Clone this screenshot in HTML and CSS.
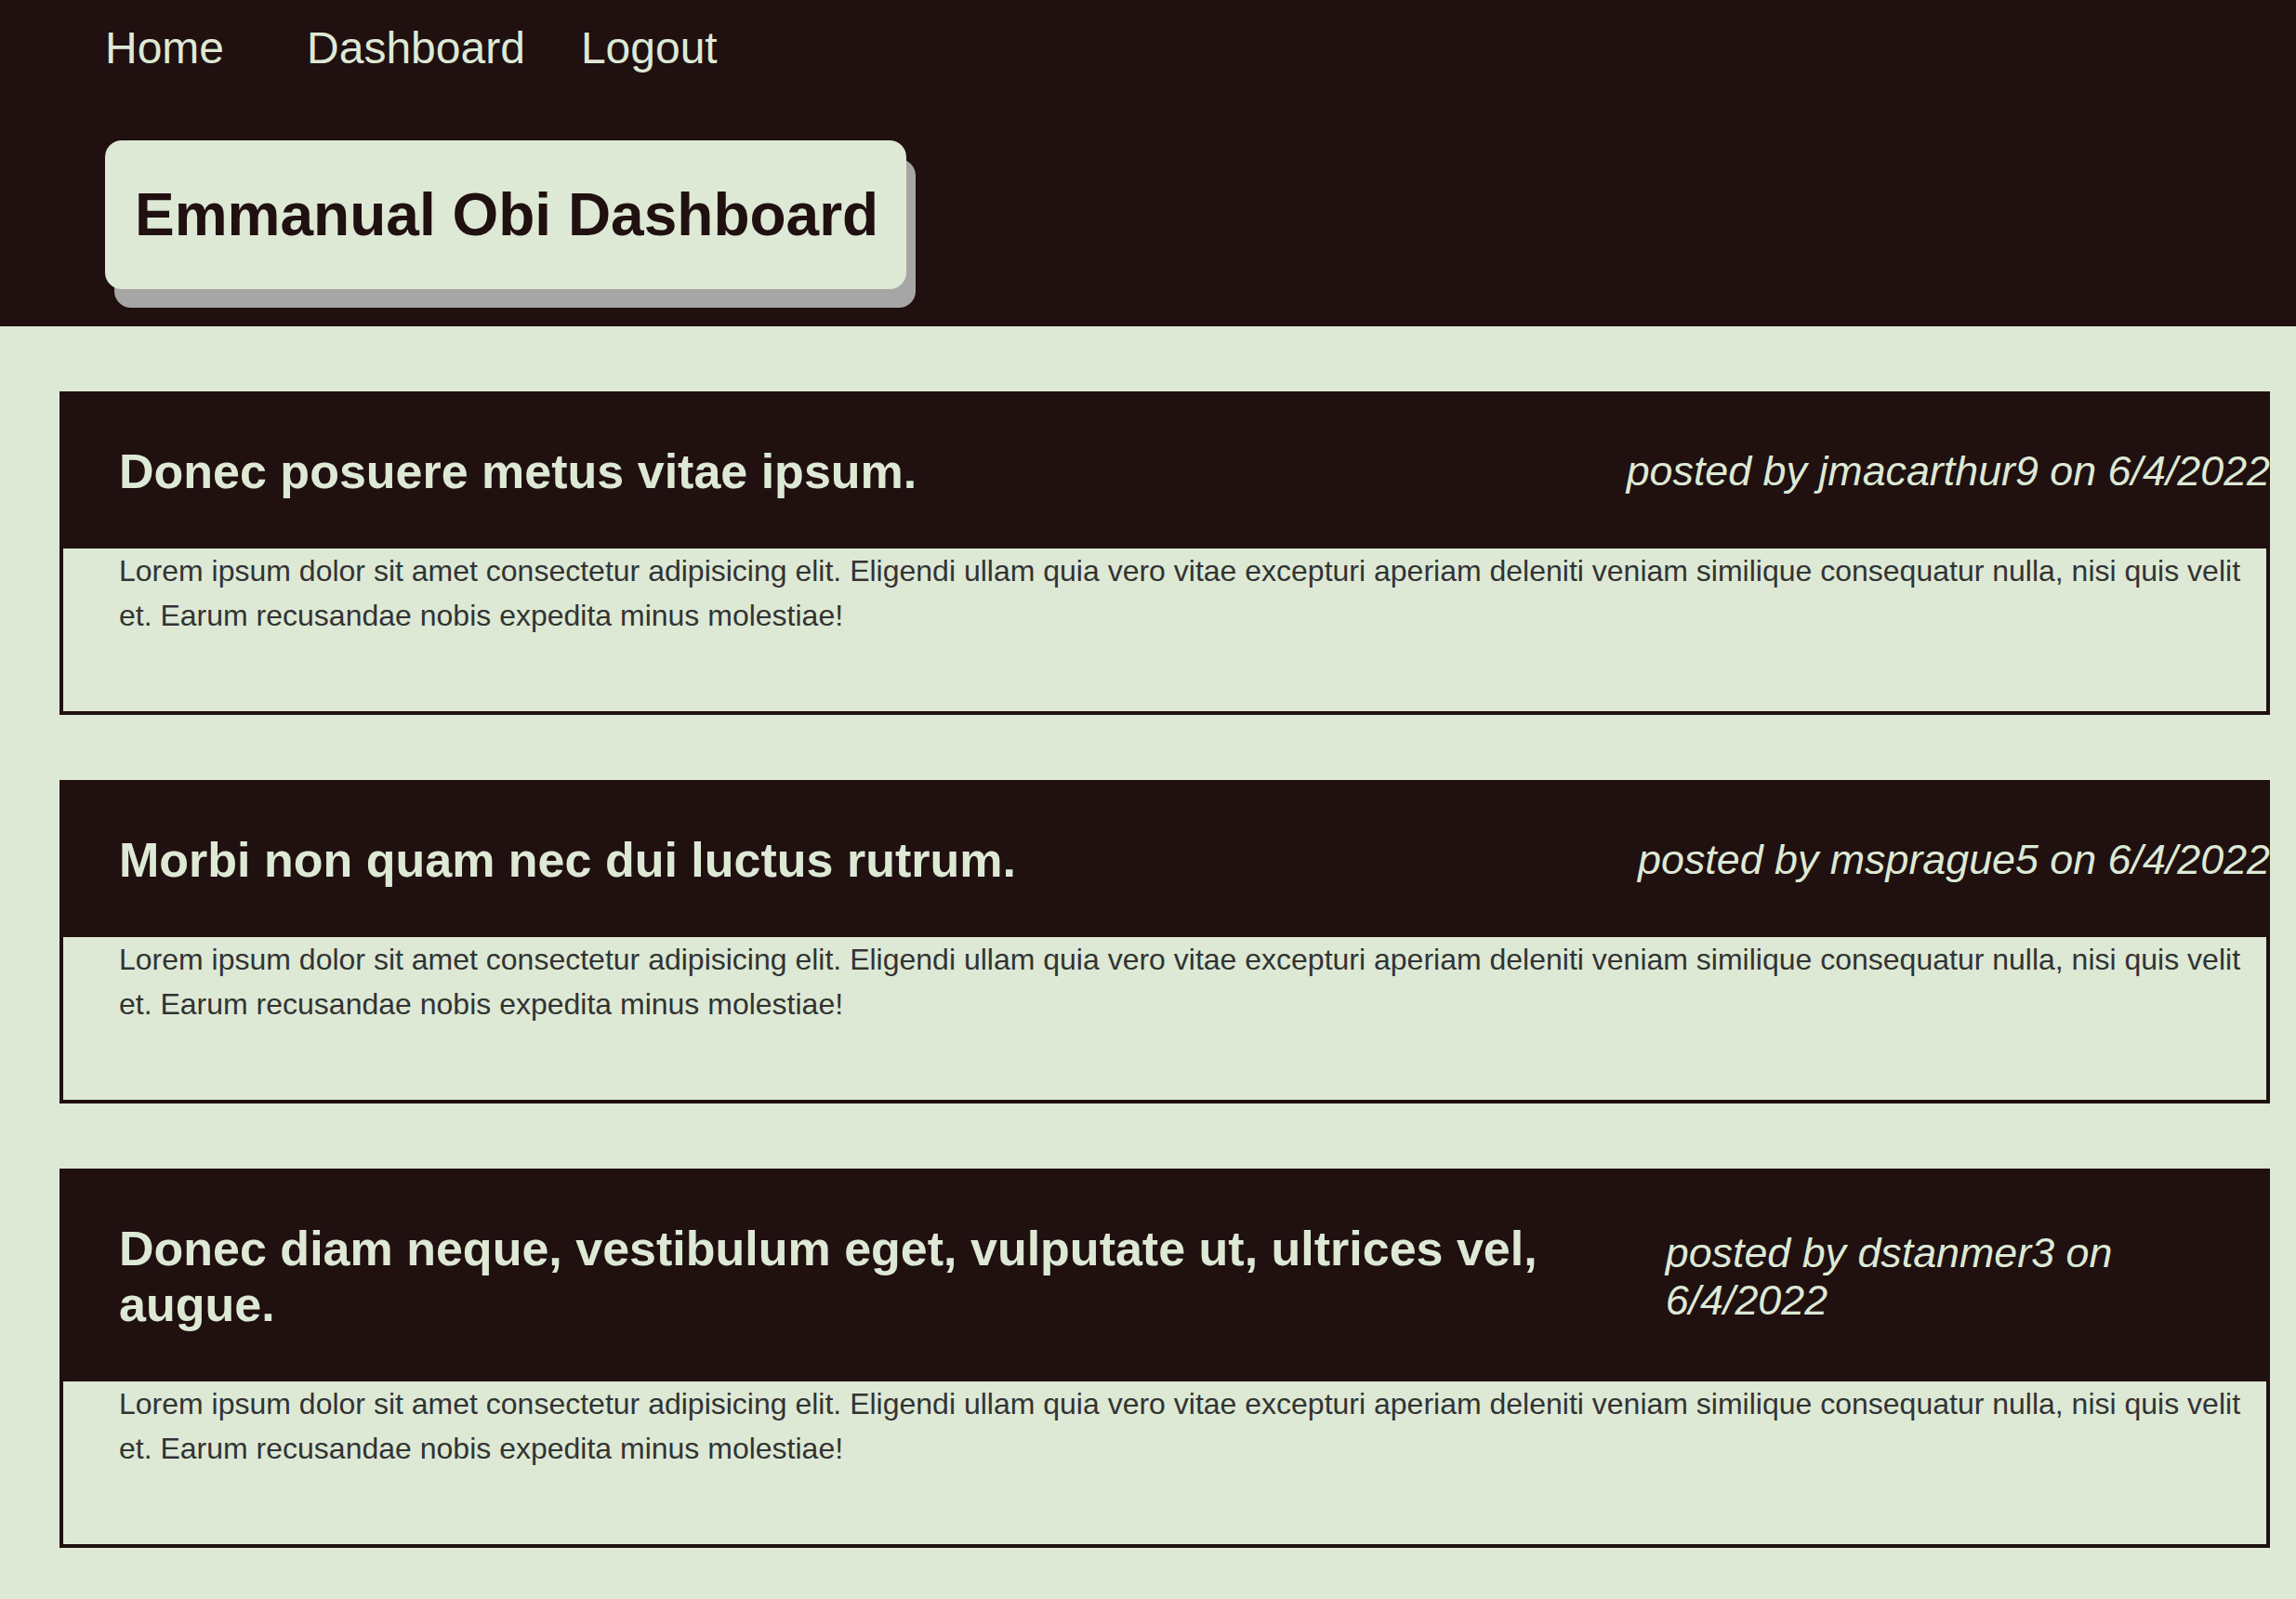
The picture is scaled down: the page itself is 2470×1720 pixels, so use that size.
FILE: index.html
```html
<!DOCTYPE html>
<html lang="en">
<head>
<meta charset="utf-8">
<title>Emmanual Obi Dashboard</title>
<link rel="stylesheet" href="styles.css">
</head>
<body>
<header class="site-header">
  <nav class="nav">
    <a class="nav-link nav-home" href="#">Home</a>
    <a class="nav-link" href="#">Dashboard</a>
    <a class="nav-link" href="#">Logout</a>
  </nav>
  <div class="title-box">
    <h1 class="title">Emmanual Obi Dashboard</h1>
  </div>
</header>
<main class="posts">
  <article class="post">
    <div class="post-head">
      <h2 class="post-title">Donec posuere metus vitae ipsum.</h2>
      <p class="post-meta">posted by jmacarthur9 on 6/4/2022</p>
    </div>
    <div class="post-body">
      <p class="post-text">Lorem ipsum dolor sit amet consectetur adipisicing elit. Eligendi ullam quia vero vitae excepturi aperiam deleniti veniam similique consequatur nulla, nisi quis velit et. Earum recusandae nobis expedita minus molestiae!</p>
    </div>
  </article>
  <article class="post">
    <div class="post-head">
      <h2 class="post-title">Morbi non quam nec dui luctus rutrum.</h2>
      <p class="post-meta">posted by msprague5 on 6/4/2022</p>
    </div>
    <div class="post-body">
      <p class="post-text">Lorem ipsum dolor sit amet consectetur adipisicing elit. Eligendi ullam quia vero vitae excepturi aperiam deleniti veniam similique consequatur nulla, nisi quis velit et. Earum recusandae nobis expedita minus molestiae!</p>
    </div>
  </article>
  <article class="post">
    <div class="post-head">
      <h2 class="post-title">Donec diam neque, vestibulum eget, vulputate ut, ultrices vel, augue.</h2>
      <p class="post-meta">posted by dstanmer3 on 6/4/2022</p>
    </div>
    <div class="post-body">
      <p class="post-text">Lorem ipsum dolor sit amet consectetur adipisicing elit. Eligendi ullam quia vero vitae excepturi aperiam deleniti veniam similique consequatur nulla, nisi quis velit et. Earum recusandae nobis expedita minus molestiae!</p>
    </div>
  </article>
</main>
</body>
</html>
```
FILE: styles.css
```css
* {
  box-sizing: border-box;
}

html, body {
  margin: 0;
  padding: 0;
}

body {
  background: #dde9d5;
  font-family: "Liberation Sans", Arial, Helvetica, sans-serif;
  color: #333333;
  min-height: 1720px;
}

.site-header {
  background: #201010;
  padding: 24px 0 40px 113px;
}

.nav {
  display: flex;
  gap: 60px;
}

.nav-link {
  color: #dde9d5;
  text-decoration: none;
  font-size: 48px;
  line-height: normal;
}

.nav-home {
  margin-right: 29px;
}

.title-box {
  display: inline-block;
  margin-top: 72px;
  background: #dde9d5;
  border-radius: 18px;
  padding: 0 30px 0 32px;
  box-shadow: 10px 20px 0 #a6a6a6;
}

.title {
  margin: 0.67em 0;
  font-size: 64px;
  font-weight: bold;
  color: #201010;
  line-height: normal;
}

.posts {
  display: flex;
  flex-direction: column;
  gap: 70px;
  padding: 70px 28px 0 64px;
}

.post-head {
  background: #201010;
  display: flex;
  justify-content: space-between;
  align-items: center;
  padding: 56px 0 53px 64px;
}

.post-title {
  margin: 0;
  font-size: 52px;
  font-weight: bold;
  color: #dde9d5;
  line-height: normal;
}

.post-meta {
  margin: 0;
  font-size: 44.8px;
  font-style: italic;
  color: #dde9d5;
  line-height: normal;
}

.post-body {
  border: 4px solid #201010;
  border-top: 0;
  padding: 0 12px 79px 60px;
}

.post-text {
  margin: 0;
  font-size: 32px;
  line-height: 48px;
  color: #333333;
}
```
